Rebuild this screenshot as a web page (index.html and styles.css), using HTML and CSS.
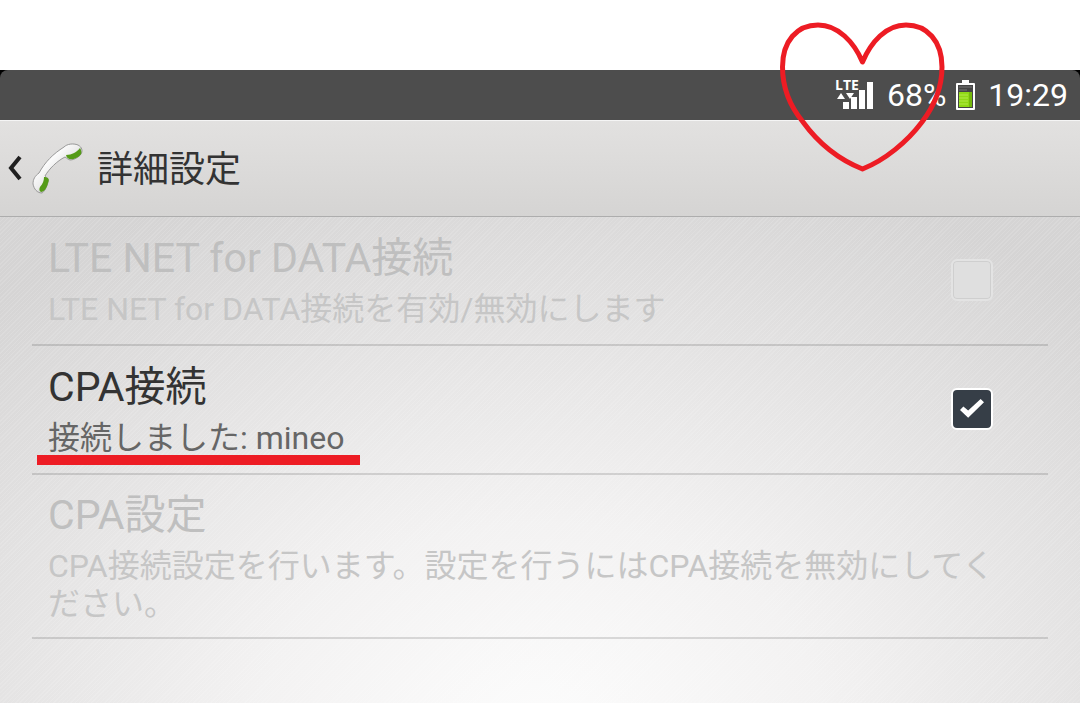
FILE: index.html
```html
<!DOCTYPE html>
<html lang="ja">
<head>
    <meta charset="UTF-8">
    <meta name="viewport" content="width=device-width, initial-scale=1.0">
    <title>詳細設定</title>
    <link rel="stylesheet" href="styles.css">
</head>
<body>

<div class="screen">
    <div class="status-wrap">
        <div class="status-bar">
            <svg class="signal" width="40" height="44" viewBox="0 -6 40 44" aria-hidden="true">
                <text class="signal-label" x="0" y="11">LTE</text>
                <path d="M2 20h8l-4-6zM11 14h8l-4 6zM8 23h6v7H8zM16 18h6v12h-6zM24 11h6v19h-6zM32 3h6v27h-6z" fill="#fff"/>
            </svg>
            <span class="percent">68%</span>
            <svg class="battery" width="20" height="30" viewBox="0 0 20 30" aria-hidden="true">
                <path d="M6 0h7v3h5q1 0 1 1v25q0 1-1 1H1q-1 0-1-1V4q0-1 1-1h5z" fill="#fff"/>
                <path d="M2 5h15v23H2z" fill="#454545"/>
                <path d="M3 7h13M3 10h8" stroke="#777"/>
                <path d="M3 12h13v15H3z" fill="#8fd916"/>
                <path d="M3 15h9M3 18h9M3 21h9M3 24h9" stroke="#b5e84a"/>
                <path d="M13 12h3v15h-3z" fill="#74b80c"/>
            </svg>
            <span class="clock">19:29</span>
        </div>
        <svg class="heart" width="166" height="154" viewBox="0 0 166 154" aria-hidden="true">
            <path d="M82.5 41C74 21 58 4 38 4C17 4 2.5 20 2.5 46C2.5 66 9 84 23 101C39 123 60 139 82.5 148C105 139 127 121 142 101C155 84 162 66 162 46C162 20 147 4 126 4C106 4 91 21 82.5 41Z" fill="none" stroke="#ed1c24" stroke-width="5" stroke-linejoin="round"/>
        </svg>
    </div>

    <header class="title-bar">
        <a class="back" href="#" aria-label="戻る">
            <svg width="16" height="28" viewBox="0 0 16 28"><path d="M14 2L5 13l9 11" fill="none" stroke="#202020" stroke-width="4"/></svg>
        </a>
        <svg class="phone" width="54" height="54" viewBox="0 0 54 54" aria-hidden="true">
            <defs>
                <linearGradient id="handset" x1="0" y1="0" x2="1" y2="1">
                    <stop offset="0.3" stop-color="#fff"/>
                    <stop offset="0.5" stop-color="#ececec"/>
                    <stop offset="0.65" stop-color="#b0b0b0"/>
                </linearGradient>
            </defs>
            <path d="M2 42C2 37 4 34 8 31C14 20 22 12 33 5C36 2 42 1 47 3C51 5 52 9 50 12C48 15 43 18 39 18C36 17 36 16 34 15C26 19 18 27 14 34C16 36 18 37 17 40C16 45 13 50 11 51C6 51 3 47 2 42Z" fill="url(#handset)" stroke="#999" stroke-width="1"/>
            <path d="M35 13C41 13 46 10 49 6C52 11 50 14 45 16C41 18 36 18 35 13Z" fill="#559b18"/>
            <path d="M13 35C17 35 19 37 17 41C16 46 13 50 10 50C8 49 8 47 9 45C12 42 13 38 13 35Z" fill="#559b18"/>
        </svg>
        <h1>詳細設定</h1>
    </header>

    <main class="settings">
        <label class="row disabled">
            <span class="text">
                <span class="name">LTE NET for DATA接続</span>
                <span class="summary">LTE NET for DATA接続を有効/無効にします</span>
            </span>
            <input class="check" type="checkbox" disabled>
        </label>
        <label class="row">
            <span class="text">
                <span class="name">CPA接続</span>
                <span class="summary marked">接続しました: mineo</span>
            </span>
            <input class="check" type="checkbox" checked>
        </label>
        <button class="row disabled" type="button" disabled>
            <span class="text">
                <span class="name">CPA設定</span>
                <span class="summary">CPA接続設定を行います。設定を行うにはCPA接続を無効にしてください。</span>
            </span>
        </button>
    </main>
</div>

</body>
</html>
```

FILE: styles.css
```css
* {
    box-sizing: border-box;
}

body {
    margin: 0;
    background-color: #fff;
    font-family: Roboto, "Noto Sans CJK JP", sans-serif;
    color: #333;
}

.screen {
    display: flex;
    flex-direction: column;
    min-height: 100vh;
    padding-top: 70px;
}

.status-wrap {
    position: relative;
    background-color: #000;
}

.status-bar {
    display: flex;
    align-items: center;
    justify-content: flex-end;
    height: 50px;
    padding: 0 12px;
    border-radius: 8px 8px 0 0;
    background-color: #4d4d4d;
    color: #fff;
    font-size: 32px;
}

.signal-label {
    font-family: "Open Sans", sans-serif;
    font-size: 14px;
    font-weight: bold;
    fill: #fff;
}

.percent {
    margin-left: 12px;
}

.battery {
    margin: 0 12px 0 10px;
}

/* Corazón dibujado encima de la barra */
.heart {
    position: absolute;
    top: -49px;
    right: 134px;
    z-index: 1;
}

.title-bar {
    display: flex;
    align-items: center;
    height: 97px;
    padding-left: 6px;
    background: linear-gradient(#e2e1e0, #d5d4d3);
    border-top: 1px solid #f5f5f5;
    border-bottom: 1px solid #adadad;
    box-shadow: 0 1px 3px rgba(0, 0, 0, 0.2);
}

.back {
    display: flex;
}

.phone {
    margin: 0 12px 0 9px;
}

h1 {
    margin: 0;
    padding-bottom: 6px;
    font-size: 36px;
    font-weight: normal;
}

/* Rayas diagonales sobre un degradado radial */
.settings {
    flex: 1;
    padding: 0 32px;
    background:
        repeating-linear-gradient(135deg, rgba(255, 255, 255, 0.12) 0 1px, transparent 1px 3px),
        radial-gradient(ellipse 75% 120% at 50% 105%, #fcfcfc, #f3f2f2 35%, #e3e2e2 70%, #d5d4d4);
}

.row {
    display: flex;
    align-items: center;
    width: 100%;
    padding: 15px 55px 16px 16px;
    border: 0;
    border-bottom: 2px solid rgba(0, 0, 0, 0.13);
    background: none;
    color: #333;
    font-family: inherit;
    text-align: left;
}

button.row {
    padding: 14px 36px 14px 16px;
}

.text {
    flex: 1;
}

.name,
.summary {
    display: block;
}

.name {
    margin-bottom: 6px;
    font-size: 41px;
    line-height: 52px;
}

.summary {
    color: #666;
    font-size: 32px;
    line-height: 38px;
}

.disabled .name {
    color: #bfbfbf;
}

.disabled .summary {
    color: #c6c6c6;
}

.marked {
    position: relative;
    width: max-content;
}

.marked::after {
    content: '';
    position: absolute;
    left: -11px;
    right: -16px;
    bottom: -8px;
    height: 10px;
    background-color: #ed1c24;
}

.check {
    appearance: none;
    display: grid;
    place-items: center;
    width: 42px;
    height: 42px;
    margin: 0;
    border: 2px solid #fff;
    border-radius: 6px;
    background-color: #363e47;
}

.check:checked::after {
    content: '';
    width: 24px;
    height: 20px;
    background-color: #fff;
    clip-path: polygon(0 55%, 14% 38%, 34% 58%, 86% 0, 100% 16%, 34% 94%);
}

.check:disabled {
    border-color: #e3e3e3;
    background-color: #dfdfdf;
    box-shadow: inset 0 0 0 1px #cfcfcf;
}
```
